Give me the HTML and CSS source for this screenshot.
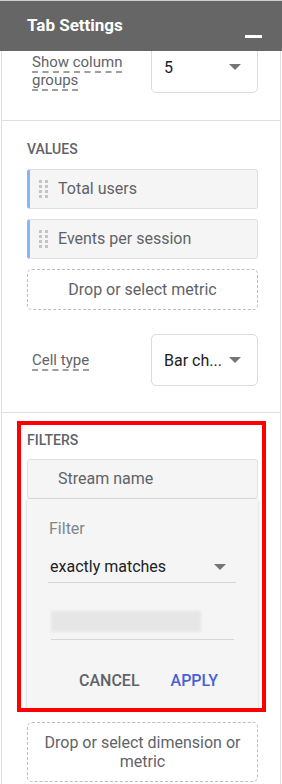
FILE: index.html
```html
<!DOCTYPE html>
<html>
<head>
  <meta charset="UTF-8">
  <meta name="viewport" content="width=device-width, initial-scale=1.0"/>
  <title>Tab Settings</title>
  <link rel="stylesheet" href="styles.css">
</head>
<body>
<div class="panel">
  <div class="header">
    <span class="title">Tab Settings</span>
    <span class="minimize"></span>
  </div>
  <div class="content">
    <div class="section groups">
      <div class="row">
        <div class="label two-line"><span class="dashed">Show column groups</span></div>
        <div class="select"><span>5</span><span class="arrow"></span></div>
      </div>
    </div>

    <div class="section">
      <div class="heading">VALUES</div>
      <div class="chip metric"><span class="handle"></span>Total users</div>
      <div class="chip metric"><span class="handle"></span>Events per session</div>
      <div class="drop">Drop or select metric</div>
      <div class="row cell-row">
        <div class="label"><span class="dashed">Cell type</span></div>
        <div class="select"><span>Bar ch...</span><span class="arrow"></span></div>
      </div>
    </div>

    <div class="section filters">
      <div class="highlight"></div>
      <div class="heading">FILTERS</div>
      <div class="chip dim"><span class="spacer"></span>Stream name</div>
      <div class="popup">
        <div class="field-label">Filter</div>
        <div class="field-select"><span>exactly matches</span><span class="arrow"></span></div>
        <div class="field-input"><div class="blurred"></div></div>
        <div class="actions">
          <span class="btn cancel">CANCEL</span>
          <span class="btn apply">APPLY</span>
        </div>
      </div>
      <div class="drop two">Drop or select dimension or metric</div>
    </div>
  </div>
</div>
</body>
</html>
```

FILE: styles.css
```css
body {
  margin: 0;
  font-family: Roboto, "Liberation Sans", Arial, sans-serif;
  background: #fff;
}
.panel {
  width: 282px;
  height: 784px;
  overflow: hidden;
}
.header {
  border-top: 1px solid #d0d0d0;
  background-color: #666;
  display: flex;
  align-items: center;
  justify-content: space-between;
  padding: 0 20px 0 27px;
  box-sizing: border-box;
  height: 51px;
}
.title {
  color: #fff;
  font-weight: 700;
  font-size: 17px;
  margin-top: -2px;
}
.minimize {
  width: 17px;
  height: 3px;
  background: #fff;
  margin-top: 20px;
}
.content {
  margin-left: 1px;
  width: 278px;
  border-left: 1px solid #e0e0e0;
  border-right: 1px solid #e0e0e0;
  height: 733px;
  overflow: hidden;
}
.section {
  padding: 20px 22px 26px 25px;
  border-bottom: 1px solid #e0e0e0;
  position: relative;
}
.section.groups {
  margin-top: -10px;
  padding-top: 0;
  padding-bottom: 27px;
}
.row {
  display: flex;
  align-items: center;
  justify-content: space-between;
  padding-left: 5px;
}
.label {
  width: 110px;
  font-size: 15px;
  line-height: 18px;
  color: #5f6368;
}
.label.two-line {
  padding-top: 8px;
}
.dashed {
  border-bottom: 2px dashed #9e9e9e;
}
.select {
  width: 107px;
  height: 52px;
  box-sizing: border-box;
  border: 1px solid #dadce0;
  border-radius: 5px;
  padding: 0 16px 0 12px;
  display: flex;
  align-items: center;
  justify-content: space-between;
  font-size: 16px;
  color: #202124;
}
.arrow {
  width: 0;
  height: 0;
  border-left: 6px solid transparent;
  border-right: 6px solid transparent;
  border-top: 6px solid #757575;
}
.heading {
  font-size: 14px;
  font-weight: 500;
  line-height: 16px;
  color: #5f6368;
  margin-bottom: 12px;
}
.chip {
  height: 40px;
  box-sizing: border-box;
  background: #f5f5f5;
  border: 1px solid #e0e0e0;
  border-radius: 3px;
  display: flex;
  align-items: center;
  font-size: 16px;
  line-height: 20px;
  color: #5f6368;
  margin-bottom: 10px;
}
.chip.metric {
  border-left: 3px solid #8ab4f8;
}
.handle {
  width: 9px;
  height: 18px;
  margin: 0 10px 0 9px;
  position: relative;
}
.handle::before {
  content: "";
  position: absolute;
  left: 0;
  top: 0;
  width: 3px;
  height: 3px;
  background: #c4c4c4;
  box-shadow: 6px 0 #c4c4c4, 0 5px #c4c4c4, 6px 5px #c4c4c4,
    0 10px #c4c4c4, 6px 10px #c4c4c4, 0 15px #c4c4c4, 6px 15px #c4c4c4;
}
.spacer {
  width: 30px;
}
.drop {
  height: 41px;
  box-sizing: border-box;
  border: 1px dashed #bdbdbd;
  border-radius: 5px;
  display: flex;
  align-items: center;
  justify-content: center;
  text-align: center;
  font-size: 16px;
  line-height: 19px;
  color: #5f6368;
}
.cell-row {
  margin-top: 24px;
}
.section.filters {
  border-bottom: none;
  padding-top: 19px;
}
.filters .heading {
  margin-bottom: 11px;
}
.filters .chip {
  margin-bottom: 0;
}
.popup {
  background: #f5f5f5;
  box-shadow: 0 1px 3px rgba(0, 0, 0, 0.25);
  padding: 20px 21px 17px 21px;
  height: 210px;
  box-sizing: border-box;
}
.field-label {
  font-size: 16px;
  line-height: 20px;
  color: #80868b;
  padding-left: 1px;
}
.field-select {
  margin-top: 18px;
  width: 188px;
  display: flex;
  align-items: center;
  justify-content: space-between;
  font-size: 16px;
  line-height: 20px;
  color: #202124;
  padding: 0 10px 5px 2px;
  box-sizing: border-box;
  border-bottom: 1px solid #d6d6d6;
}
.field-input {
  margin: 28px 0 0 3px;
  width: 183px;
  padding-bottom: 7px;
  border-bottom: 1px solid #d6d6d6;
}
.blurred {
  width: 150px;
  height: 21px;
  background: #e6e6e6;
  filter: blur(1.5px);
}
.actions {
  display: flex;
  justify-content: flex-end;
  gap: 31px;
  padding-right: 19px;
  margin-top: 31px;
}
.btn {
  font-size: 16px;
  font-weight: 500;
  line-height: 20px;
}
.cancel {
  color: #5f6368;
}
.apply {
  color: #4a5fd6;
}
.drop.two {
  margin-top: 13px;
  height: 60px;
  padding: 0 8px;
}
.highlight {
  position: absolute;
  left: 15px;
  top: 8px;
  width: 249px;
  height: 291px;
  box-sizing: border-box;
  border: 4px solid #ff0000;
  z-index: 2;
}
```
